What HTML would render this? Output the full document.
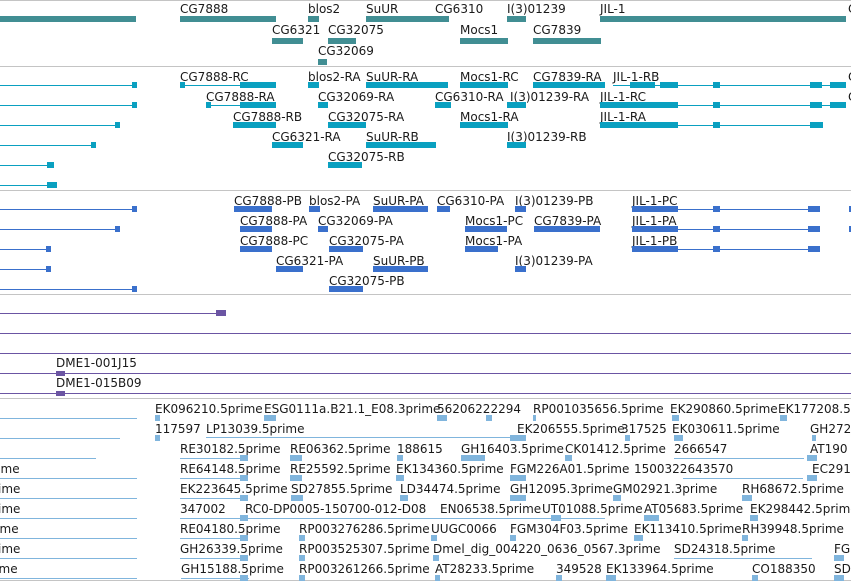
<!DOCTYPE html>
<html><head><meta charset="utf-8"><style>
body{margin:0;width:851px;height:582px;overflow:hidden;background:#fff;position:relative;font-family:"DejaVu Sans","Liberation Sans",sans-serif}
div{position:absolute}
.t{font-size:12px;line-height:14px;white-space:nowrap;color:#1a1a1a}
.s{height:1px;left:0;width:851px;background:#c4c4c4}
.T{background:#418e93;height:6px;margin-top:1px}
.C{background:#0aa0c0;height:6px;margin-top:-1px}
.c{background:#0aa0c0;height:1px}
.B{background:#3a70cc;height:6px;margin-top:-1px}
.b{background:#3a70cc;height:1px}
.P{background:#6b55a3;height:5px}
.p{background:#6b55a3;height:1px}
.L{background:#80b5dd;height:6px;margin-top:-1px}
.l{background:#80b5dd;height:1px}
</style></head><body>
<div class="s" style="top:0"></div>
<div class="s" style="top:66px"></div>
<div class="s" style="top:190px"></div>
<div class="s" style="top:294px"></div>
<div class="s" style="top:398px"></div>
<div class="s" style="top:580px"></div>

<div class="T" style="left:0;top:15px;width:136px"></div>
<div class="T" style="left:180px;top:15px;width:96px"></div>
<div class="T" style="left:308px;top:15px;width:11px"></div>
<div class="T" style="left:366px;top:15px;width:83px"></div>
<div class="T" style="left:507px;top:15px;width:19px"></div>
<div class="T" style="left:600px;top:15px;width:246px"></div>
<div class="T" style="left:272px;top:37px;width:31px"></div>
<div class="T" style="left:328px;top:37px;width:28px"></div>
<div class="T" style="left:460px;top:37px;width:48px"></div>
<div class="T" style="left:533px;top:37px;width:68px"></div>
<div class="T" style="left:318px;top:58px;width:9px"></div>
<div class="t" style="left:180px;top:2px">CG7888</div>
<div class="t" style="left:308px;top:2px">blos2</div>
<div class="t" style="left:366px;top:2px">SuUR</div>
<div class="t" style="left:435px;top:2px">CG6310</div>
<div class="t" style="left:507px;top:2px">I(3)01239</div>
<div class="t" style="left:600px;top:2px">JIL-1</div>
<div class="t" style="left:848px;top:2px">C</div>
<div class="t" style="left:272px;top:23px">CG6321</div>
<div class="t" style="left:328px;top:23px">CG32075</div>
<div class="t" style="left:460px;top:23px">Mocs1</div>
<div class="t" style="left:533px;top:23px">CG7839</div>
<div class="t" style="left:318px;top:44px">CG32069</div>

<div class="c" style="left:0;top:85px;width:137px"></div><div class="C" style="left:132px;top:83px;width:5px"></div>
<div class="c" style="left:0;top:105px;width:137px"></div><div class="C" style="left:132px;top:103px;width:5px"></div>
<div class="c" style="left:0;top:125px;width:120px"></div><div class="C" style="left:115px;top:123px;width:5px"></div>
<div class="c" style="left:0;top:145px;width:96px"></div><div class="C" style="left:91px;top:143px;width:5px"></div>
<div class="c" style="left:0;top:165px;width:54px"></div><div class="C" style="left:47px;top:163px;width:7px"></div>
<div class="c" style="left:0;top:185px;width:57px"></div><div class="C" style="left:47px;top:183px;width:10px"></div>
<div class="t" style="left:180px;top:70px">CG7888-RC</div>
<div class="t" style="left:308px;top:70px">blos2-RA</div>
<div class="t" style="left:366px;top:70px">SuUR-RA</div>
<div class="t" style="left:460px;top:70px">Mocs1-RC</div>
<div class="t" style="left:533px;top:70px">CG7839-RA</div>
<div class="t" style="left:613px;top:70px">JIL-1-RB</div>
<div class="t" style="left:848px;top:70px">C</div>
<div class="c" style="left:180px;top:85px;width:96px"></div><div class="C" style="left:180px;top:83px;width:5px"></div><div class="C" style="left:240px;top:83px;width:36px"></div>
<div class="C" style="left:308px;top:83px;width:11px"></div>
<div class="C" style="left:366px;top:83px;width:82px"></div>
<div class="C" style="left:460px;top:83px;width:48px"></div>
<div class="C" style="left:533px;top:83px;width:72px"></div>
<div class="c" style="left:613px;top:85px;width:233px"></div><div class="C" style="left:630px;top:83px;width:25px"></div><div class="C" style="left:660px;top:83px;width:18px"></div><div class="C" style="left:713px;top:83px;width:7px"></div><div class="C" style="left:810px;top:83px;width:12px"></div><div class="C" style="left:830px;top:83px;width:16px"></div>
<div class="t" style="left:206px;top:90px">CG7888-RA</div>
<div class="t" style="left:318px;top:90px">CG32069-RA</div>
<div class="t" style="left:435px;top:90px">CG6310-RA</div>
<div class="t" style="left:510px;top:90px">I(3)01239-RA</div>
<div class="t" style="left:600px;top:90px">JIL-1-RC</div>
<div class="t" style="left:848px;top:90px">C</div>
<div class="c" style="left:206px;top:105px;width:70px"></div><div class="C" style="left:240px;top:103px;width:36px"></div><div class="C" style="left:206px;top:103px;width:5px"></div>
<div class="C" style="left:318px;top:103px;width:10px"></div>
<div class="C" style="left:435px;top:103px;width:16px"></div>
<div class="C" style="left:507px;top:103px;width:19px"></div>
<div class="c" style="left:600px;top:105px;width:246px"></div><div class="C" style="left:600px;top:103px;width:78px"></div><div class="C" style="left:713px;top:103px;width:7px"></div><div class="C" style="left:810px;top:103px;width:12px"></div><div class="C" style="left:830px;top:103px;width:16px"></div>
<div class="t" style="left:233px;top:110px">CG7888-RB</div>
<div class="t" style="left:328px;top:110px">CG32075-RA</div>
<div class="t" style="left:460px;top:110px">Mocs1-RA</div>
<div class="t" style="left:600px;top:110px">JIL-1-RA</div>
<div class="C" style="left:233px;top:123px;width:43px"></div>
<div class="C" style="left:328px;top:123px;width:38px"></div>
<div class="C" style="left:460px;top:123px;width:48px"></div>
<div class="c" style="left:600px;top:125px;width:223px"></div><div class="C" style="left:600px;top:123px;width:78px"></div><div class="C" style="left:713px;top:123px;width:7px"></div><div class="C" style="left:810px;top:123px;width:13px"></div>
<div class="t" style="left:272px;top:130px">CG6321-RA</div>
<div class="t" style="left:366px;top:130px">SuUR-RB</div>
<div class="t" style="left:507px;top:130px">I(3)01239-RB</div>
<div class="C" style="left:272px;top:143px;width:31px"></div>
<div class="C" style="left:366px;top:143px;width:70px"></div>
<div class="C" style="left:507px;top:143px;width:19px"></div>
<div class="t" style="left:328px;top:150px">CG32075-RB</div>
<div class="C" style="left:328px;top:163px;width:34px"></div>

<div class="b" style="left:0;top:209px;width:137px"></div><div class="B" style="left:132px;top:207px;width:5px"></div>
<div class="b" style="left:0;top:229px;width:120px"></div><div class="B" style="left:115px;top:227px;width:5px"></div>
<div class="b" style="left:0;top:249px;width:51px"></div><div class="B" style="left:46px;top:247px;width:5px"></div>
<div class="b" style="left:0;top:269px;width:51px"></div><div class="B" style="left:46px;top:267px;width:5px"></div>
<div class="b" style="left:0;top:289px;width:137px"></div><div class="B" style="left:132px;top:287px;width:5px"></div>
<div class="t" style="left:234px;top:194px">CG7888-PB</div>
<div class="t" style="left:309px;top:194px">blos2-PA</div>
<div class="t" style="left:373px;top:194px">SuUR-PA</div>
<div class="t" style="left:437px;top:194px">CG6310-PA</div>
<div class="t" style="left:515px;top:194px">I(3)01239-PB</div>
<div class="t" style="left:632px;top:194px">JIL-1-PC</div>
<div class="B" style="left:234px;top:207px;width:38px"></div>
<div class="B" style="left:309px;top:207px;width:11px"></div>
<div class="B" style="left:373px;top:207px;width:55px"></div>
<div class="B" style="left:437px;top:207px;width:13px"></div>
<div class="B" style="left:515px;top:207px;width:11px"></div>
<div class="b" style="left:632px;top:209px;width:188px"></div><div class="B" style="left:632px;top:207px;width:46px"></div><div class="B" style="left:713px;top:207px;width:7px"></div><div class="B" style="left:808px;top:207px;width:12px"></div><div class="B" style="left:849px;top:207px;width:2px"></div>
<div class="t" style="left:240px;top:214px">CG7888-PA</div>
<div class="t" style="left:318px;top:214px">CG32069-PA</div>
<div class="t" style="left:465px;top:214px">Mocs1-PC</div>
<div class="t" style="left:534px;top:214px">CG7839-PA</div>
<div class="t" style="left:632px;top:214px">JIL-1-PA</div>
<div class="B" style="left:240px;top:227px;width:32px"></div>
<div class="B" style="left:318px;top:227px;width:10px"></div>
<div class="B" style="left:465px;top:227px;width:42px"></div>
<div class="B" style="left:534px;top:227px;width:66px"></div>
<div class="b" style="left:632px;top:229px;width:188px"></div><div class="B" style="left:632px;top:227px;width:46px"></div><div class="B" style="left:713px;top:227px;width:7px"></div><div class="B" style="left:808px;top:227px;width:12px"></div><div class="B" style="left:849px;top:227px;width:2px"></div>
<div class="t" style="left:240px;top:234px">CG7888-PC</div>
<div class="t" style="left:329px;top:234px">CG32075-PA</div>
<div class="t" style="left:465px;top:234px">Mocs1-PA</div>
<div class="t" style="left:632px;top:234px">JIL-1-PB</div>
<div class="B" style="left:240px;top:247px;width:32px"></div>
<div class="B" style="left:329px;top:247px;width:34px"></div>
<div class="B" style="left:465px;top:247px;width:33px"></div>
<div class="b" style="left:632px;top:249px;width:188px"></div><div class="B" style="left:632px;top:247px;width:46px"></div><div class="B" style="left:713px;top:247px;width:7px"></div><div class="B" style="left:808px;top:247px;width:12px"></div>
<div class="t" style="left:276px;top:254px">CG6321-PA</div>
<div class="t" style="left:373px;top:254px">SuUR-PB</div>
<div class="t" style="left:515px;top:254px">I(3)01239-PA</div>
<div class="B" style="left:276px;top:267px;width:27px"></div>
<div class="B" style="left:373px;top:267px;width:55px"></div>
<div class="B" style="left:515px;top:267px;width:11px"></div>
<div class="t" style="left:329px;top:274px">CG32075-PB</div>
<div class="B" style="left:329px;top:287px;width:34px"></div>

<div class="p" style="left:0;top:313px;width:226px"></div><div class="P" style="left:216px;top:310px;width:10px;height:6px"></div>
<div class="p" style="left:0;top:333px;width:851px"></div>
<div class="p" style="left:0;top:353px;width:851px"></div>
<div class="p" style="left:0;top:373px;width:851px"></div>
<div class="p" style="left:0;top:393px;width:851px"></div>
<div class="t" style="left:56px;top:356px">DME1-001J15</div>
<div class="t" style="left:56px;top:376px">DME1-015B09</div>
<div class="P" style="left:56px;top:371px;width:9px"></div>
<div class="P" style="left:56px;top:391px;width:9px"></div>

<div class="l" style="left:0;top:418px;width:137px"></div>
<div class="l" style="left:0;top:438px;width:120px"></div>
<div class="l" style="left:0;top:458px;width:96px"></div>
<div class="l" style="left:0;top:478px;width:137px"></div>
<div class="l" style="left:0;top:498px;width:137px"></div>
<div class="l" style="left:0;top:518px;width:137px"></div>
<div class="l" style="left:0;top:538px;width:137px"></div>
<div class="l" style="left:0;top:558px;width:137px"></div>
<div class="l" style="left:0;top:578px;width:137px"></div>
<div class="t" style="left:-23px;top:462px">5prime</div>
<div class="t" style="left:-26px;top:482px">.5prime</div>
<div class="t" style="left:-26px;top:502px">.5prime</div>
<div class="t" style="left:-24px;top:522px">5prime</div>
<div class="t" style="left:-26px;top:542px">.5prime</div>
<div class="t" style="left:-25px;top:562px">5prime</div>

<div class="t" style="left:155px;top:402px">EK096210.5prime</div>
<div class="t" style="left:264px;top:402px">ESG0111a.B21.1_E08.3prime</div>
<div class="t" style="left:437px;top:402px">56206222294</div>
<div class="t" style="left:533px;top:402px">RP001035656.5prime</div>
<div class="t" style="left:670px;top:402px">EK290860.5prime</div>
<div class="t" style="left:778px;top:402px">EK177208.5</div>
<div class="t" style="left:155px;top:422px">117597</div>
<div class="t" style="left:206px;top:422px">LP13039.5prime</div>
<div class="t" style="left:517px;top:422px">EK206555.5prime</div>
<div class="t" style="left:621px;top:422px">317525</div>
<div class="t" style="left:672px;top:422px">EK030611.5prime</div>
<div class="t" style="left:810px;top:422px">GH272</div>
<div class="t" style="left:180px;top:442px">RE30182.5prime</div>
<div class="t" style="left:290px;top:442px">RE06362.5prime</div>
<div class="t" style="left:397px;top:442px">188615</div>
<div class="t" style="left:461px;top:442px">GH16403.5prime</div>
<div class="t" style="left:565px;top:442px">CK01412.5prime</div>
<div class="t" style="left:674px;top:442px">2666547</div>
<div class="t" style="left:810px;top:442px">AT190</div>
<div class="t" style="left:180px;top:462px">RE64148.5prime</div>
<div class="t" style="left:290px;top:462px">RE25592.5prime</div>
<div class="t" style="left:396px;top:462px">EK134360.5prime</div>
<div class="t" style="left:510px;top:462px">FGM226A01.5prime</div>
<div class="t" style="left:634px;top:462px">1500322643570</div>
<div class="t" style="left:812px;top:462px">EC291</div>
<div class="t" style="left:180px;top:482px">EK223645.5prime</div>
<div class="t" style="left:291px;top:482px">SD27855.5prime</div>
<div class="t" style="left:400px;top:482px">LD34474.5prime</div>
<div class="t" style="left:510px;top:482px">GH12095.3prime</div>
<div class="t" style="left:613px;top:482px">GM02921.3prime</div>
<div class="t" style="left:742px;top:482px">RH68672.5prime</div>
<div class="t" style="left:180px;top:502px">347002</div>
<div class="t" style="left:245px;top:502px">RC0-DP0005-150700-012-D08</div>
<div class="t" style="left:440px;top:502px">EN06538.5prime</div>
<div class="t" style="left:542px;top:502px">UT01088.5prime</div>
<div class="t" style="left:644px;top:502px">AT05683.5prime</div>
<div class="t" style="left:750px;top:502px">EK298442.5prime</div>
<div class="t" style="left:180px;top:522px">RE04180.5prime</div>
<div class="t" style="left:299px;top:522px">RP003276286.5prime</div>
<div class="t" style="left:431px;top:522px">UUGC0066</div>
<div class="t" style="left:510px;top:522px">FGM304F03.5prime</div>
<div class="t" style="left:634px;top:522px">EK113410.5prime</div>
<div class="t" style="left:742px;top:522px">RH39948.5prime</div>
<div class="t" style="left:180px;top:542px">GH26339.5prime</div>
<div class="t" style="left:299px;top:542px">RP003525307.5prime</div>
<div class="t" style="left:433px;top:542px">Dmel_dig_004220_0636_0567.3prime</div>
<div class="t" style="left:674px;top:542px">SD24318.5prime</div>
<div class="t" style="left:834px;top:542px">FG</div>
<div class="t" style="left:181px;top:562px">GH15188.5prime</div>
<div class="t" style="left:299px;top:562px">RP003261266.5prime</div>
<div class="t" style="left:435px;top:562px">AT28233.5prime</div>
<div class="t" style="left:556px;top:562px">349528</div>
<div class="t" style="left:606px;top:562px">EK133964.5prime</div>
<div class="t" style="left:752px;top:562px">CO188350</div>
<div class="t" style="left:834px;top:562px">SD</div>

<div class="L" style="left:155px;top:416px;width:5px"></div><div class="L" style="left:264px;top:416px;width:12px"></div><div class="L" style="left:437px;top:416px;width:10px"></div><div class="L" style="left:486px;top:416px;width:6px"></div><div class="L" style="left:533px;top:416px;width:3px"></div><div class="L" style="left:672px;top:416px;width:7px"></div><div class="L" style="left:780px;top:416px;width:7px"></div>
<div class="L" style="left:155px;top:436px;width:5px"></div><div class="l" style="left:206px;top:437px;width:310px"></div><div class="L" style="left:510px;top:436px;width:16px"></div><div class="L" style="left:625px;top:436px;width:5px"></div><div class="L" style="left:674px;top:436px;width:9px"></div><div class="L" style="left:812px;top:436px;width:4px"></div>
<div class="l" style="left:180px;top:458px;width:68px"></div><div class="L" style="left:240px;top:456px;width:8px"></div><div class="L" style="left:290px;top:456px;width:12px"></div><div class="L" style="left:397px;top:456px;width:6px"></div><div class="L" style="left:461px;top:456px;width:24px"></div><div class="L" style="left:565px;top:456px;width:7px"></div><div class="l" style="left:674px;top:458px;width:130px"></div><div class="L" style="left:807px;top:456px;width:10px"></div>
<div class="l" style="left:180px;top:478px;width:68px"></div><div class="L" style="left:240px;top:476px;width:8px"></div><div class="L" style="left:290px;top:476px;width:12px"></div><div class="L" style="left:396px;top:476px;width:8px"></div><div class="L" style="left:510px;top:476px;width:16px"></div><div class="l" style="left:683px;top:478px;width:120px"></div><div class="L" style="left:807px;top:476px;width:10px"></div>
<div class="l" style="left:180px;top:498px;width:68px"></div><div class="L" style="left:240px;top:496px;width:8px"></div><div class="L" style="left:291px;top:496px;width:12px"></div><div class="L" style="left:400px;top:496px;width:8px"></div><div class="L" style="left:510px;top:496px;width:16px"></div><div class="L" style="left:613px;top:496px;width:8px"></div><div class="L" style="left:742px;top:496px;width:10px"></div>
<div class="l" style="left:180px;top:518px;width:425px"></div><div class="L" style="left:240px;top:516px;width:8px"></div><div class="L" style="left:551px;top:516px;width:10px"></div><div class="L" style="left:644px;top:516px;width:15px"></div><div class="L" style="left:750px;top:516px;width:8px"></div>
<div class="l" style="left:180px;top:538px;width:68px"></div><div class="L" style="left:240px;top:536px;width:8px"></div><div class="L" style="left:299px;top:536px;width:6px"></div><div class="L" style="left:431px;top:536px;width:6px"></div><div class="L" style="left:510px;top:536px;width:6px"></div><div class="L" style="left:634px;top:536px;width:9px"></div><div class="L" style="left:742px;top:536px;width:6px"></div>
<div class="l" style="left:180px;top:558px;width:68px"></div><div class="L" style="left:240px;top:556px;width:8px"></div><div class="L" style="left:299px;top:556px;width:6px"></div><div class="L" style="left:433px;top:556px;width:6px"></div><div class="l" style="left:674px;top:558px;width:138px"></div><div class="L" style="left:834px;top:556px;width:10px"></div>
<div class="l" style="left:181px;top:578px;width:68px"></div><div class="L" style="left:240px;top:576px;width:8px"></div><div class="L" style="left:299px;top:576px;width:6px"></div><div class="L" style="left:435px;top:576px;width:5px"></div><div class="L" style="left:556px;top:576px;width:6px"></div><div class="L" style="left:606px;top:576px;width:10px"></div><div class="L" style="left:752px;top:576px;width:6px"></div><div class="L" style="left:834px;top:576px;width:10px"></div>
</body></html>
